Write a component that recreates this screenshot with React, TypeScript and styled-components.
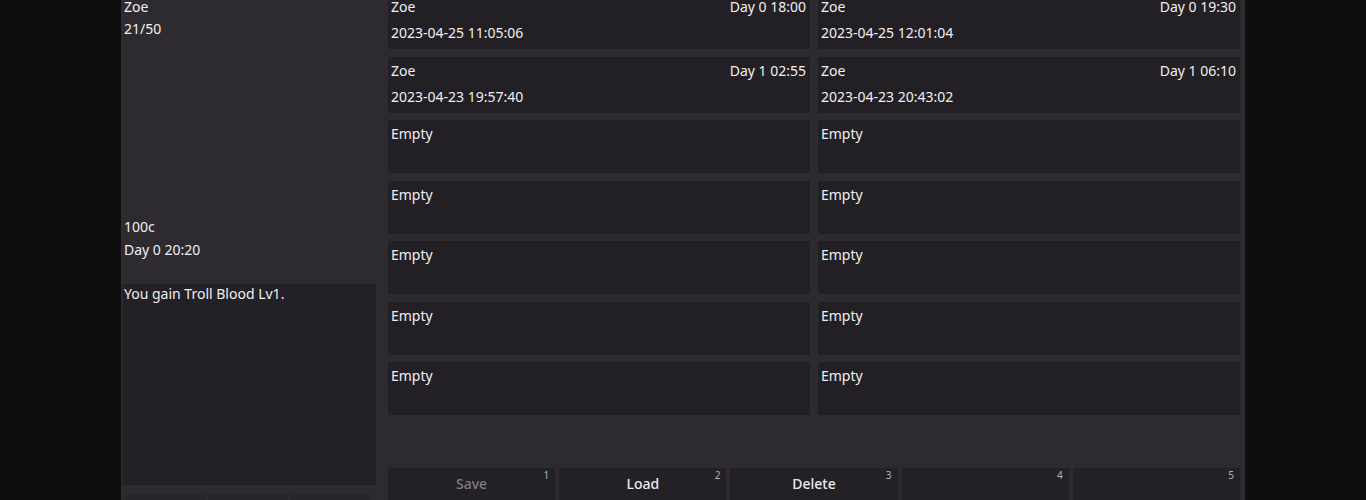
import React from "react";
import styled, { createGlobalStyle } from "styled-components";

const Global = createGlobalStyle`
  html, body { margin: 0; padding: 0; background: #0e0e0e; overflow: hidden; }
  body { font-family: "Noto Sans", "Open Sans", sans-serif; font-size: 14px; color: #f0eef2; }
`;

const Frame = styled.div`
  margin: 0 0 0 121px;
  width: 1124px;
  height: 507px;
  background: #2d2b2f;
  display: grid;
  grid-template-columns: 267px 1fr;
  grid-template-rows: 507px;
`;

const Side = styled.div`
  display: flex;
  flex-direction: column;
  padding: 0 0 0 3px;
  overflow: hidden;
`;

const Line = styled.div<{ $compact?: boolean; $mt?: number }>`
  line-height: ${(p) => (p.$compact ? 14 : 22)}px;
  margin-top: ${(p) => p.$mt ?? 0}px;
  white-space: nowrap;
  flex: none;
`;

const Log = styled.div`
  margin-top: 23px;
  margin-left: -1px;
  width: 253px;
  height: 201px;
  flex: none;
  background: #232125;
  padding: 0 1px;
  box-sizing: border-box;
  line-height: 20px;
`;

const SideButtons = styled.div`
  display: flex;
  gap: 3px;
  margin-top: 9px;
  padding-left: 1px;
  flex: none;
`;

const SideButton = styled.div`
  width: 80px;
  height: 30px;
  background: #28262a;
`;

const Main = styled.div`
  display: flex;
  flex-direction: column;
  padding-right: 5px;
  overflow: hidden;
`;

const Grid = styled.div`
  display: grid;
  grid-template-columns: 1fr 1fr;
  column-gap: 8px;
  row-gap: 7.5px;
`;

type Kind = "top" | "filled" | "empty";

const slotHeight: Record<Kind, number> = { top: 49, filled: 56, empty: 53 };
const slotPad: Record<Kind, string> = {
  top: "0 4px 0 3px",
  filled: "4px 4px 0 3px",
  empty: "4px 3px 0 3px",
};

const Slot = styled.div<{ $kind: Kind }>`
  background: #222024;
  border-radius: 2px;
  height: ${(p) => slotHeight[p.$kind]}px;
  box-sizing: border-box;
  padding: ${(p) => slotPad[p.$kind]};
  display: flex;
  flex-direction: column;
  gap: ${(p) => (p.$kind === "top" ? 9 : 6)}px;
`;

const SlotTop = styled.div<{ $compact?: boolean }>`
  display: flex;
  justify-content: space-between;
  line-height: ${(p) => (p.$compact ? 14 : 20)}px;
`;

const SlotDate = styled.div`
  line-height: 20px;
`;

const Buttons = styled.div`
  margin-top: auto;
  margin-bottom: 1px;
  display: grid;
  grid-template-columns: repeat(5, 1fr);
  gap: 4px;
`;

const Button = styled.div<{ $disabled?: boolean }>`
  position: relative;
  height: 38px;
  background: #232125;
  display: flex;
  justify-content: center;
  padding-top: 6px;
  box-sizing: border-box;
  line-height: 20px;
  font-weight: 500;
  color: ${(p) => (p.$disabled ? "#807e83" : "#eceaee")};
`;

const Key = styled.span`
  position: absolute;
  top: 0px;
  right: 6px;
  font-size: 10px;
  line-height: 14px;
  color: #b5b3b8;
  font-weight: 400;
`;

const filled = [
  { name: "Zoe", day: "Day 0 18:00", date: "2023-04-25 11:05:06" },
  { name: "Zoe", day: "Day 0 19:30", date: "2023-04-25 12:01:04" },
  { name: "Zoe", day: "Day 1 02:55", date: "2023-04-23 19:57:40" },
  { name: "Zoe", day: "Day 1 06:10", date: "2023-04-23 20:43:02" },
];

const buttons = [
  { label: "Save", disabled: true },
  { label: "Load" },
  { label: "Delete" },
  { label: "" },
  { label: "" },
];

export default function App() {
  return (
    <>
      <Global />
      <Frame>
        <Side>
          <Line $compact>Zoe</Line>
          <Line $mt={4}>21/50</Line>
          <Line $mt={176}>100c</Line>
          <Line $mt={1}>Day 0 20:20</Line>
          <Log>You gain Troll Blood Lv1.</Log>
          <SideButtons>
            <SideButton />
            <SideButton />
            <SideButton />
          </SideButtons>
        </Side>
        <Main>
          <Grid>
            {filled.map((s, i) => {
              const kind: Kind = i < 2 ? "top" : "filled";
              return (
                <Slot key={i} $kind={kind}>
                  <SlotTop $compact={kind === "top"}>
                    <span>{s.name}</span>
                    <span>{s.day}</span>
                  </SlotTop>
                  <SlotDate>{s.date}</SlotDate>
                </Slot>
              );
            })}
            {Array.from({ length: 10 }).map((_, i) => (
              <Slot key={"e" + i} $kind="empty">
                <SlotTop>
                  <span>Empty</span>
                </SlotTop>
              </Slot>
            ))}
          </Grid>
          <Buttons>
            {buttons.map((b, i) => (
              <Button key={i} $disabled={b.disabled}>
                {b.label}
                <Key>{i + 1}</Key>
              </Button>
            ))}
          </Buttons>
        </Main>
      </Frame>
    </>
  );
}
